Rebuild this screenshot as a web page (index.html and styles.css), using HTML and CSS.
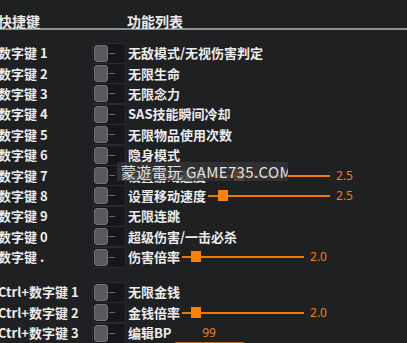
FILE: index.html
```html
<!DOCTYPE html>
<html>
<head>
<meta charset="utf-8">
<link rel="stylesheet" href="styles.css">
</head>
<body>
<div class="page">
  <div class="head">
    <div class="hkey">快捷键</div>
    <div class="hfunc">功能列表</div>
  </div>
  <div class="list">
    <div class="row"><div class="key">数字键 1</div><div class="tg"><span class="knob"></span><span class="dash"></span></div><div class="lbl">无敌模式/无视伤害判定</div></div>
    <div class="row"><div class="key">数字键 2</div><div class="tg"><span class="knob"></span><span class="dash"></span></div><div class="lbl">无限生命</div></div>
    <div class="row"><div class="key">数字键 3</div><div class="tg"><span class="knob"></span><span class="dash"></span></div><div class="lbl">无限念力</div></div>
    <div class="row"><div class="key">数字键 4</div><div class="tg"><span class="knob"></span><span class="dash"></span></div><div class="lbl">SAS技能瞬间冷却</div></div>
    <div class="row"><div class="key">数字键 5</div><div class="tg"><span class="knob"></span><span class="dash"></span></div><div class="lbl">无限物品使用次数</div></div>
    <div class="row"><div class="key">数字键 6</div><div class="tg"><span class="knob"></span><span class="dash"></span></div><div class="lbl">隐身模式</div></div>
    <div class="row"><div class="key">数字键 7</div><div class="tg"><span class="knob"></span><span class="dash"></span></div><div class="lbl">设置游戏速度</div><div class="slider"><span class="sk" style="left:26px"></span></div><div class="val">2.5</div></div>
    <div class="row"><div class="key">数字键 8</div><div class="tg"><span class="knob"></span><span class="dash"></span></div><div class="lbl">设置移动速度</div><div class="slider"><span class="sk" style="left:10px"></span></div><div class="val">2.5</div></div>
    <div class="row"><div class="key">数字键 9</div><div class="tg"><span class="knob"></span><span class="dash"></span></div><div class="lbl">无限连跳</div></div>
    <div class="row"><div class="key">数字键 0</div><div class="tg"><span class="knob"></span><span class="dash"></span></div><div class="lbl">超级伤害/一击必杀</div></div>
    <div class="row"><div class="key">数字键 .</div><div class="tg"><span class="knob"></span><span class="dash"></span></div><div class="lbl">伤害倍率</div><div class="slider"><span class="sk" style="left:9px"></span></div><div class="val">2.0</div></div>
    <div class="spacer"></div>
    <div class="row"><div class="key">Ctrl+数字键 1</div><div class="tg"><span class="knob"></span><span class="dash"></span></div><div class="lbl">无限金钱</div></div>
    <div class="row"><div class="key">Ctrl+数字键 2</div><div class="tg"><span class="knob"></span><span class="dash"></span></div><div class="lbl">金钱倍率</div><div class="slider"><span class="sk" style="left:9px"></span></div><div class="val">2.0</div></div>
    <div class="row"><div class="key">Ctrl+数字键 3</div><div class="tg"><span class="knob"></span><span class="dash"></span></div><div class="lbl">编辑BP</div><div class="inp">99</div></div>
  </div>
  <div class="wm">蒙遊電玩 GAME735.COM</div>
</div>
</body>
</html>
```
FILE: styles.css
```css
html, body {
  margin: 0;
  padding: 0;
  background: #1f2022;
  overflow: hidden;
}
.page {
  position: relative;
  width: 407px;
  height: 343px;
  font-family: "Noto Sans CJK SC", "Noto Sans", sans-serif;
  color: #ececec;
}
.head {
  display: flex;
  height: 30px;
  box-sizing: border-box;
  padding-top: 11px;
  border-bottom: 2px solid #8e8e8e;
  font-size: 14px;
  font-weight: bold;
  line-height: 20px;
}
.hkey {
  width: 128px;
  margin-left: -2px;
}
.hfunc {
  margin-left: 1px;
}
.list {
  padding-top: 13px;
}
.row {
  display: flex;
  align-items: center;
  height: 20.4px;
  font-size: 13px;
  font-weight: bold;
  line-height: 20px;
  white-space: nowrap;
}
.spacer {
  height: 15px;
}
.key {
  width: 94px;
  margin-left: -2px;
  flex: none;
}
.tg {
  position: relative;
  flex: none;
  width: 34px;
  height: 21px;
  box-sizing: border-box;
  border: 1px solid #2a2c30;
  border-radius: 3px;
  background: #15171b;
  margin-right: 2px;
}
.knob {
  position: absolute;
  left: 1px;
  top: 1px;
  width: 14px;
  height: 17px;
  box-sizing: border-box;
  border: 1px solid #727477;
  border-radius: 3px;
  background: #58595c;
}
.dash {
  position: absolute;
  left: 16px;
  top: 9px;
  width: 6px;
  height: 1px;
  background: #6a6c70;
}
.lbl {
  flex: none;
}
.slider {
  position: relative;
  flex: none;
  width: 122px;
  height: 2px;
  background: #f07a00;
  margin-left: 2px;
}
.sk {
  position: absolute;
  top: -5px;
  width: 10px;
  height: 11px;
  background: #ff8200;
}
.val {
  margin-left: 6px;
  font-family: "Noto Sans", sans-serif;
  font-weight: normal;
  font-size: 12px;
  color: #e8800f;
}
.inp {
  width: 69px;
  margin-left: 3px;
  height: 19px;
  box-sizing: border-box;
  border-bottom: 1px solid #c86c10;
  text-align: center;
  font-family: "Noto Sans", sans-serif;
  font-weight: normal;
  font-size: 12px;
  line-height: 18px;
  color: #e8800f;
}
.wm {
  position: absolute;
  left: 117px;
  top: 162px;
  width: 171px;
  height: 19px;
  background: rgba(52, 52, 54, 0.82);
  font-size: 15px;
  letter-spacing: 0.35px;
  line-height: 19px;
  color: #e2e2e2;
  padding-left: 4px;
  box-sizing: border-box;
  white-space: nowrap;
  overflow: hidden;
}
```
